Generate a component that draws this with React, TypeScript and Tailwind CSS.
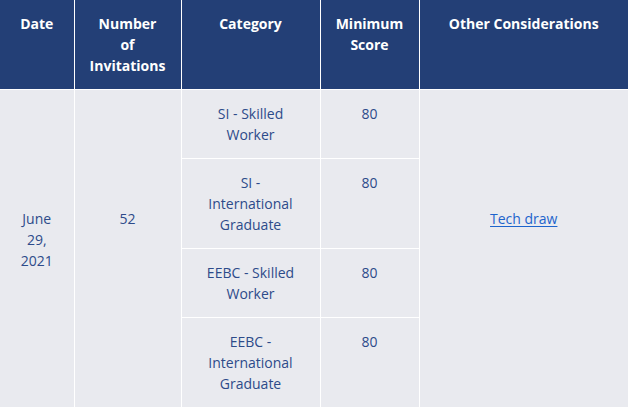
// Table of invitation draws
const rows = [
  { category: ['SI - Skilled', 'Worker'], score: '80', tall: false },
  { category: ['SI -', 'International', 'Graduate'], score: '80', tall: true },
  { category: ['EEBC - Skilled', 'Worker'], score: '80', tall: false },
  { category: ['EEBC -', 'International', 'Graduate'], score: '80', tall: true },
]

const th = 'bg-[#233f76] text-white font-bold align-top text-center px-3 py-[13px] border-r border-b border-white'
const td = 'bg-[#e9eaef] text-[#2d4b8a] align-top text-center px-3 py-[13px] border-r border-b border-white'

export default function App() {
  return (
    <div className="w-[628px] h-[407px] overflow-hidden bg-white font-['Open_Sans',sans-serif] text-[14px] leading-[21px]">
      <table className="w-[628px] table-fixed border-collapse">
        <colgroup>
          <col className="w-[74px]" />
          <col className="w-[107px]" />
          <col className="w-[139px]" />
          <col className="w-[99px]" />
          <col className="w-[209px]" />
        </colgroup>
        <thead>
          <tr>
            <th className={th}>Date</th>
            <th className={th}>
              Number
              <br />
              of
              <br />
              Invitations
            </th>
            <th className={th}>Category</th>
            <th className={th}>
              Minimum
              <br />
              Score
            </th>
            <th className={th + ' border-r-0'}>Other Considerations</th>
          </tr>
        </thead>
        <tbody>
          {rows.map((r, i) => (
            <tr key={i}>
              {i === 0 && (
                <td rowSpan={4} className={td + ' pt-[118px]'}>
                  June
                  <br />
                  29,
                  <br />
                  2021
                </td>
              )}
              {i === 0 && (
                <td rowSpan={4} className={td + ' pt-[118px]'}>
                  52
                </td>
              )}
              <td className={td}>
                {r.category.map((line, j) => (
                  <div key={j}>{line}</div>
                ))}
              </td>
              <td className={td}>{r.score}</td>
              {i === 0 && (
                <td rowSpan={4} className={td + ' pt-[118px] border-r-0'}>
                  <a href="#" className="text-[#1d64cc] underline underline-offset-2">
                    Tech draw
                  </a>
                </td>
              )}
            </tr>
          ))}
        </tbody>
      </table>
    </div>
  )
}
